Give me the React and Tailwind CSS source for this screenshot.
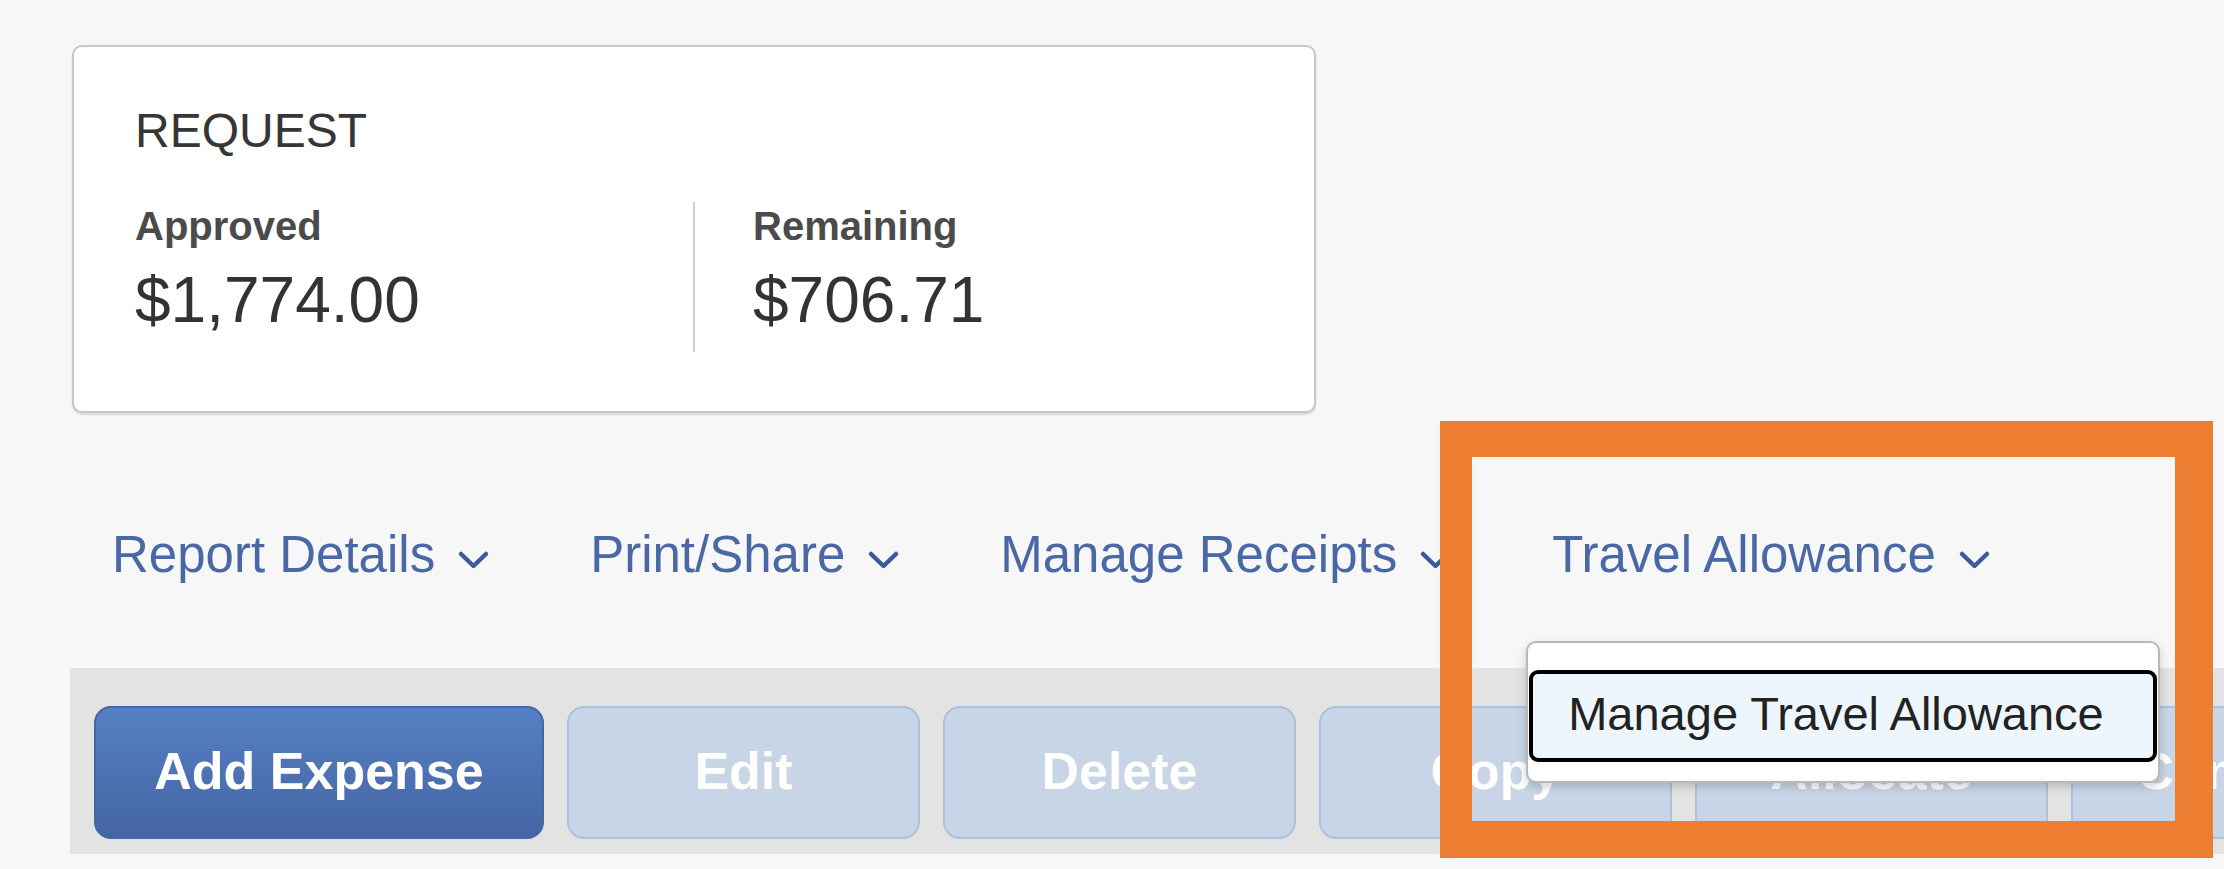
import React from 'react'

function Chevron() {
  return (
    <svg className="mt-[11px] h-[20px] w-[33px] shrink-0" viewBox="0 0 33 20" fill="none">
      <polyline points="4,4 16.5,16 29,4" stroke="#3d5a9b" strokeWidth="4.5" strokeLinecap="round" strokeLinejoin="round" />
    </svg>
  )
}

function NavItem({ label, children }) {
  return (
    <div className="relative flex items-center gap-[22px]">
      <span className="whitespace-nowrap text-[51px] leading-[51px] text-[#4a67a6]">{label}</span>
      <Chevron />
      {children}
    </div>
  )
}

function Stat({ label, value }) {
  return (
    <div className="pt-[4px]">
      <div className="text-[40px] font-bold leading-[40px] text-[#4b4b4b]">{label}</div>
      <div className="mt-[22px] text-[64px] leading-[64px] text-[#333]">{value}</div>
    </div>
  )
}

const buttons = ['Edit', 'Delete', 'Copy', 'Allocate', 'Combine']

export default function App() {
  return (
    <div className="relative h-[869px] w-[2224px] overflow-hidden bg-[#f7f7f7] font-['Liberation_Sans',Arial,sans-serif]">
      {/* request summary card */}
      <div className="ml-[72px] mt-[45px] h-[368px] w-[1244px] rounded-[10px] border-2 border-[#c8c8c8] bg-white pl-[61px] pt-[60px] shadow-[0_2px_2px_rgba(0,0,0,0.12)]">
        <div className="text-[48px] leading-[48px] text-[#363636]">REQUEST</div>
        <div className="mt-[47px] flex items-start">
          <div className="w-[558px]">
            <Stat label="Approved" value="$1,774.00" />
          </div>
          <div className="h-[150px] w-[2px] bg-[#cfcfcf]" />
          <div className="pl-[58px]">
            <Stat label="Remaining" value="$706.71" />
          </div>
        </div>
      </div>

      {/* report menu */}
      <div className="mt-[116px] flex gap-[100px] pl-[112px]">
        <NavItem label="Report Details" />
        <NavItem label="Print/Share" />
        <NavItem label="Manage Receipts" />
        <NavItem label="Travel Allowance">
          <div className="absolute left-[-26px] top-[112px] z-10 w-[634px] rounded-[10px] border-2 border-[#b8b8b8] bg-white px-[1px] pb-[19px] pt-[27px] shadow-[0_4px_10px_rgba(0,0,0,0.18)]">
            <div className="flex h-[92px] items-center rounded-[9px] border-[4px] border-black bg-[#eef6fd] pb-[5px] pl-[35px]">
              <span className="whitespace-nowrap text-[47px] leading-[47px] text-[#222]">Manage Travel Allowance</span>
            </div>
          </div>
        </NavItem>
      </div>

      {/* toolbar */}
      <div className="ml-[70px] mt-[88px] flex h-[186px] gap-[23px] bg-[#e3e3e3] pl-[24px] pt-[38px]">
        <button className="flex h-[133px] w-[450px] shrink-0 items-center justify-center rounded-[17px] border-2 border-[#4466a6] bg-gradient-to-b from-[#5680c4] to-[#4465a3] pb-[4px] text-[52px] font-bold text-white">
          Add Expense
        </button>
        {buttons.map((b) => (
          <button
            key={b}
            className="flex h-[133px] w-[353px] shrink-0 items-center justify-center overflow-hidden rounded-[17px] border-2 border-[#aac2e0] bg-[#c8d5e6] pb-[4px] text-[52px] font-bold text-white"
          >
            {b}
          </button>
        ))}
      </div>

      {/* highlight annotation */}
      <div className="pointer-events-none absolute left-[1440px] top-[421px] z-20 h-[437px] w-[773px] border-b-[37px] border-l-[32px] border-r-[38px] border-t-[36px] border-[#ed7d31]" />
    </div>
  )
}
